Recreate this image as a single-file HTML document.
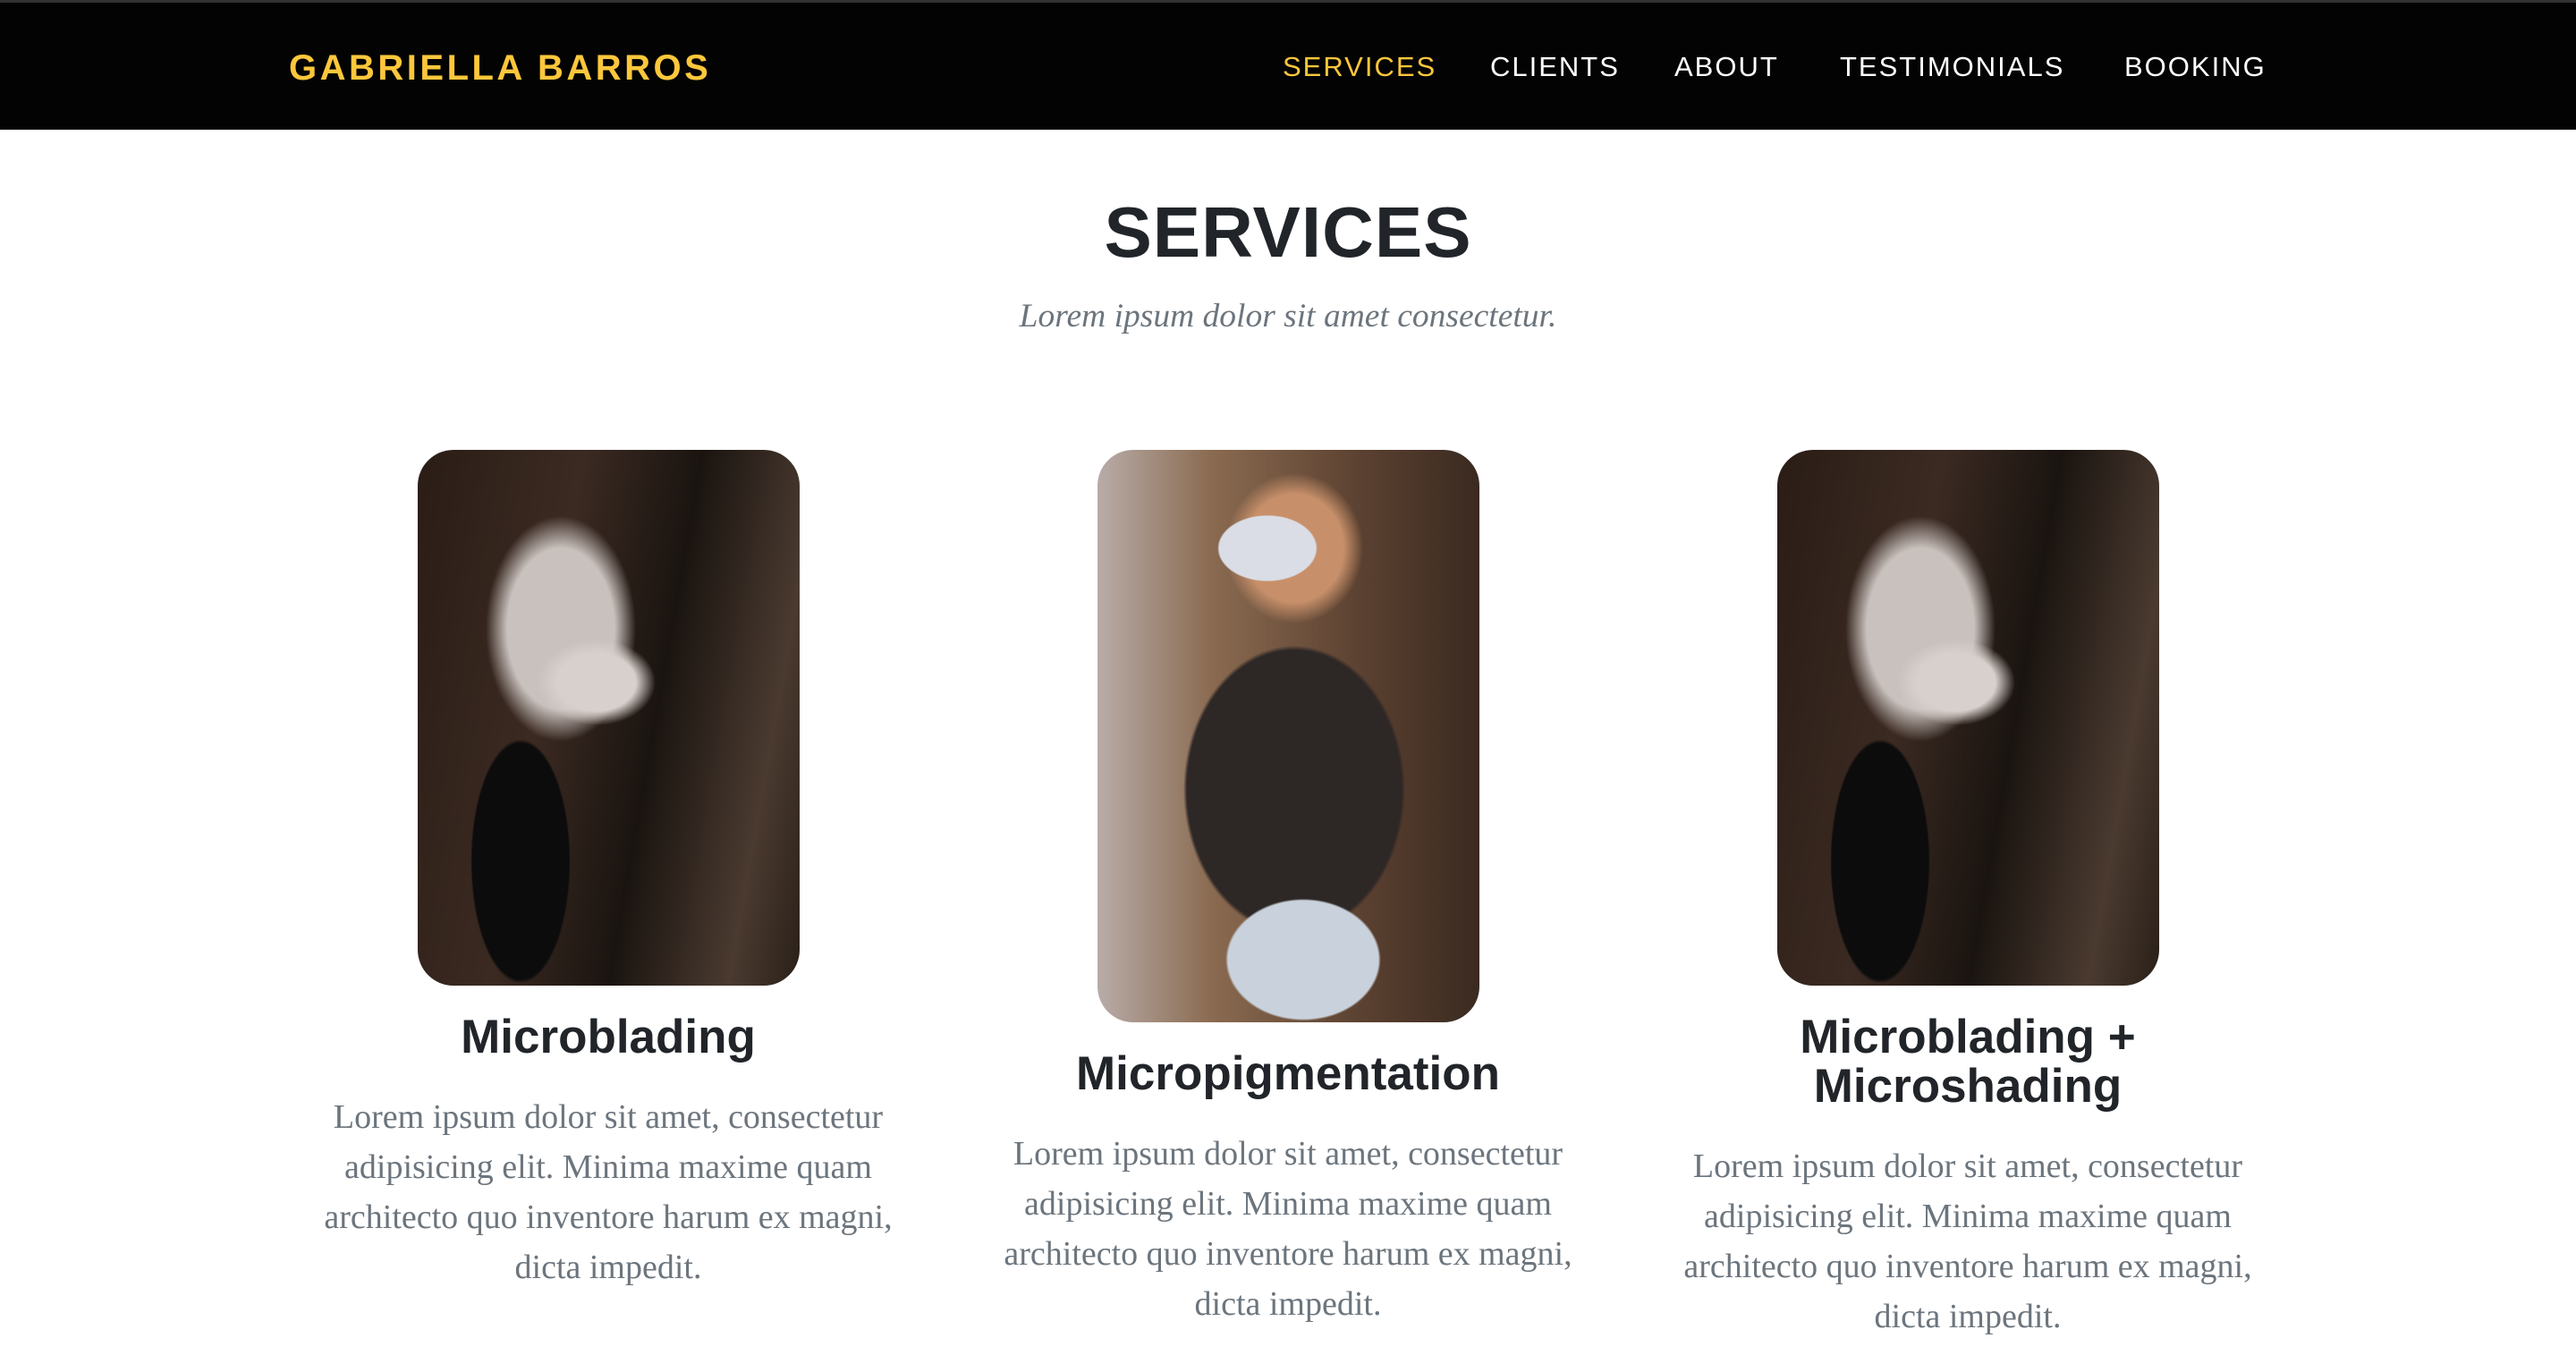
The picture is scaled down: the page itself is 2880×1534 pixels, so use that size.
<!DOCTYPE html>
<html><head><meta charset="utf-8"><style>
*{margin:0;padding:0;box-sizing:border-box}
body{width:2880px;height:1534px;background:#fff;position:relative;overflow:hidden;font-family:"Liberation Sans",sans-serif}
.nav{position:absolute;left:0;top:0;width:2880px;height:145px;background:#030303;border-top:3px solid #333}
.logo{position:absolute;left:323px;top:50px;font-weight:bold;font-size:40px;letter-spacing:3.5px;color:#fcc73b;line-height:46px}
.nl{position:absolute;top:53px;font-size:31px;letter-spacing:2px;color:#fff;line-height:38px}
h1{position:absolute;left:0;width:2880px;text-align:center;top:210px;font-size:80px;font-weight:bold;color:#212529;line-height:100px;letter-spacing:1px}
.sub{position:absolute;left:0;width:2880px;text-align:center;top:332px;font-family:"Liberation Serif",serif;font-style:italic;font-size:37.5px;color:#6c757d}
.col{position:absolute;width:760px;text-align:center}
.img{margin:0 auto;width:427px;border-radius:40px;overflow:hidden;position:relative}
.t{font-weight:bold;font-size:53px;color:#212529;line-height:55px;margin-top:30px}
.p{font-family:"Liberation Serif",serif;font-size:38px;color:#6c757d;line-height:56px;margin-top:34px}
.a{background:radial-gradient(ellipse 90px 220px at 115px 460px,#0c0c0c 60%,transparent 62%),radial-gradient(ellipse 110px 80px at 200px 260px,#d8d0cc 40%,transparent 60%),radial-gradient(ellipse 120px 180px at 160px 200px,#c9c1bd 50%,transparent 70%),linear-gradient(100deg,#2a1d16 0%,#3b2a22 35%,#1a1410 60%,#4a3a30 85%,#2a2018 100%)}
.b{background:radial-gradient(ellipse 140px 110px at 230px 570px,#c9d2dc 60%,transparent 62%),radial-gradient(ellipse 90px 60px at 190px 110px,#dadde6 60%,transparent 62%),radial-gradient(ellipse 110px 120px at 220px 110px,#c8906a 50%,transparent 70%),radial-gradient(ellipse 200px 260px at 220px 380px,#2d2726 60%,transparent 62%),linear-gradient(90deg,#b8aca8 0%,#8a6a50 30%,#5a4030 70%,#3a2a20 100%)}
</style></head><body>
<div class="nav">
<div class="logo">GABRIELLA BARROS</div>
<div class="nl" style="left:1434px;color:#fcc73b">SERVICES</div>
<div class="nl" style="left:1666px">CLIENTS</div>
<div class="nl" style="left:1872px">ABOUT</div>
<div class="nl" style="left:2057px">TESTIMONIALS</div>
<div class="nl" style="left:2375px">BOOKING</div>
</div>
<h1>SERVICES</h1>
<div class="sub">Lorem ipsum dolor sit amet consectetur.</div>
<div class="col" style="left:300px;top:503px"><div class="img a" style="height:599px"></div><div class="t">Microblading</div><div class="p">Lorem ipsum dolor sit amet, consectetur<br>adipisicing elit. Minima maxime quam<br>architecto quo inventore harum ex magni,<br>dicta impedit.</div></div>
<div class="col" style="left:1060px;top:503px"><div class="img b" style="height:640px"></div><div class="t">Micropigmentation</div><div class="p">Lorem ipsum dolor sit amet, consectetur<br>adipisicing elit. Minima maxime quam<br>architecto quo inventore harum ex magni,<br>dicta impedit.</div></div>
<div class="col" style="left:1820px;top:503px"><div class="img a" style="height:599px"></div><div class="t">Microblading +<br>Microshading</div><div class="p">Lorem ipsum dolor sit amet, consectetur<br>adipisicing elit. Minima maxime quam<br>architecto quo inventore harum ex magni,<br>dicta impedit.</div></div>
</body></html>
